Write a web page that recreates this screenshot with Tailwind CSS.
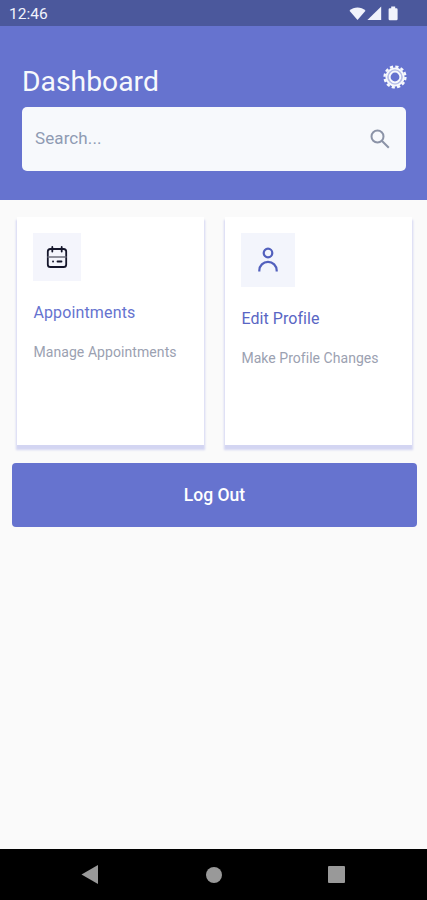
<!DOCTYPE html>
<html lang="en">
<head>
    <meta charset="UTF-8">
    <meta name="viewport" content="width=device-width, initial-scale=1.0">
    <title>Dashboard</title>
    <script src="https://cdn.jsdelivr.net/npm/@tailwindcss/browser@4"></script>
    <style>
        body { font-family: Roboto, 'Liberation Sans', sans-serif; }
    </style>
</head>
<body class="bg-[#fafafa] h-screen flex flex-col overflow-hidden">
    <!-- Status bar -->
    <div class="h-[26px] shrink-0 bg-[#4b589c] text-[#f1f3fc] flex items-center justify-between pl-[9px] pr-[29px]">
        <span class="text-[15.5px] leading-none pt-[3px]">12:46</span>
        <svg class="w-[49px] h-[16px] mt-[1px]" viewBox="0 0 49 16" fill="currentColor">
            <path d="M0.5 4.800C5 .5 12 .5 16.500 4.800L8.500 14z"/>
            <path d="M32.200 .6v13.400H18.400z"/>
            <path d="M42.200 .6h4v1.600h1.200a1.200 1.200 0 0 1 1.200 1.200v9.600a1.200 1.200 0 0 1-1.200 1.200h-6.600a1.200 1.200 0 0 1-1.200-1.200V3.400a1.200 1.200 0 0 1 1.200-1.200h1.400z"/>
        </svg>
    </div>

    <!-- Header -->
    <header class="h-[174px] shrink-0 bg-[#6673cf] pl-[22px] pr-[21px] pt-[37px]">
        <div class="h-[44px] flex justify-between">
            <h1 class="text-[28.3px] leading-[37px] text-[#f7f9fc]">Dashboard</h1>
            <svg class="w-[26px] h-[26px] mt-[1px] -mr-[1.5px]" viewBox="0 0 26 26" fill="none" stroke="#f7f9fc">
                <circle cx="13" cy="13" r="10.400" stroke-width="2.400" stroke-dasharray="3.200 2.245"/>
                <circle cx="13" cy="13" r="8.600" stroke-width="2"/>
                <circle cx="13" cy="13" r="5.400" stroke-width="2"/>
                <circle cx="13" cy="13" r="7" stroke-width="1.400" stroke-opacity=".55"/>
            </svg>
        </div>
        <div class="h-[64px] bg-[#f7f9fc] rounded-[5px] flex items-center justify-between pl-[13px] pr-[15.5px]">
            <span class="text-[17px] tracking-[0.1px] text-[#8f9bb3]">Search...</span>
            <svg class="w-[22px] h-[22px]" viewBox="0 0 22 22" fill="none" stroke="#8b93a7" stroke-width="2">
                <circle cx="8.500" cy="8.500" r="6"/>
                <path d="M12.800 12.800l7 7"/>
            </svg>
        </div>
    </header>

    <main class="grow pt-[17px] pl-[12px] pr-[10px]">
        <div class="grid grid-cols-2 gap-[21px] px-[5px]">
            <div class="h-[228px] bg-white px-[16.4px] pt-[16px] shadow-[0_4px_2px_1px_#d3d5f2]">
                <div class="size-[48px] bg-[#f4f5fc] flex items-center justify-center">
                    <svg class="w-[22px] h-[24px]" viewBox="0 0 22 24" fill="none" stroke="#15162b" stroke-width="1.800" stroke-linecap="round">
                        <rect x="1.800" y="4" width="18.400" height="18" rx="2.600"/>
                        <path d="M2 12h18" stroke="#6e6f7c" stroke-width="1.600"/>
                        <path d="M6.300 2v4.500M15.700 2v4.500M11.500 16.500h4M7 16.500h.1"/>
                    </svg>
                </div>
                <h2 class="mt-[22px] text-[16px] leading-[20px] tracking-[0.14px] text-[#6673cf] whitespace-nowrap">Appointments</h2>
                <p class="mt-[20px] text-[14px] leading-[18px] tracking-[0.08px] text-[#9ba1b1] whitespace-nowrap">Manage Appointments</p>
            </div>
            <div class="h-[228px] bg-white px-[16.4px] pt-[16px] shadow-[0_4px_2px_1px_#d3d5f2]">
                <div class="size-[54px] bg-[#f3f5fc] flex items-center justify-center">
                    <svg class="w-[22px] h-[26px]" viewBox="0 0 22 26" fill="none" stroke="#5260bd" stroke-width="2.200">
                        <circle cx="11" cy="6" r="4.300"/>
                        <path d="M2.300 24.500v-1a8.700 8.700 0 0 1 17.400 0v1"/>
                    </svg>
                </div>
                <h2 class="mt-[22px] text-[16px] leading-[20px] tracking-[0.06px] text-[#5966c4] whitespace-nowrap">Edit Profile</h2>
                <p class="mt-[20px] text-[14px] leading-[18px] tracking-[0.04px] text-[#9ba1b1] whitespace-nowrap">Make Profile Changes</p>
            </div>
        </div>

        <button class="mt-[18px] block w-full h-[64px] rounded-[4px] bg-[#6673cf] text-white text-[17.5px] font-medium">Log Out</button>
    </main>

    <!-- Android navigation bar -->
    <nav class="h-[51px] shrink-0 bg-black text-[#999999] flex items-center justify-between pl-[81px] pr-[82px]">
        <svg class="w-[17px] h-[19px]" viewBox="0 0 17 19" fill="currentColor"><path d="M.5 9.500L17 0v19z"/></svg>
        <div class="size-[16px] ml-[1px] rounded-full bg-[#999999]"></div>
        <div class="size-[17px] rounded-[1px] bg-[#999999]"></div>
    </nav>
</body>
</html>
